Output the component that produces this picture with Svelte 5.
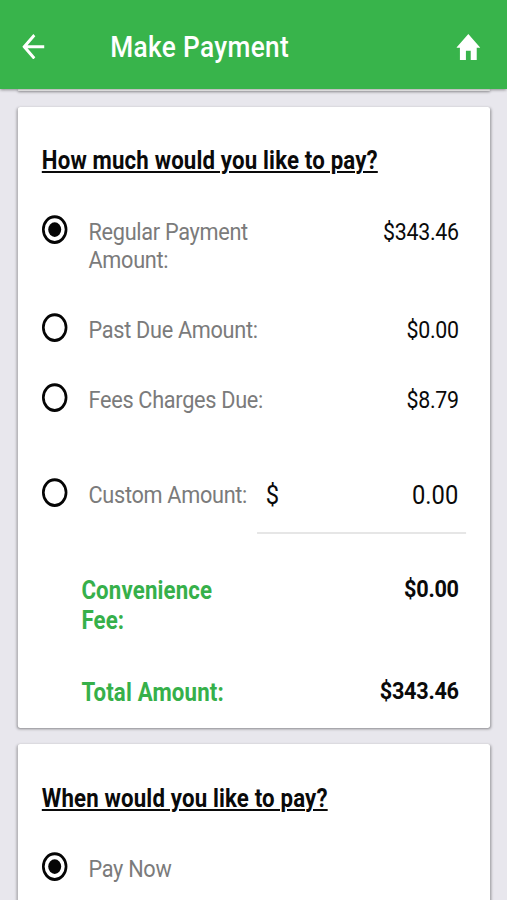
<script>
  const options = [
    { label: 'Regular Payment Amount:', amount: '$343.46', checked: true },
    { label: 'Past Due Amount:', amount: '$0.00', checked: false },
    { label: 'Fees Charges Due:', amount: '$8.79', checked: false }
  ];
</script>

{#snippet radio(checked)}
  <svg class="radio" width="30" height="30" viewBox="0 0 30 30">
    <circle cx="14.5" cy="14.6" r="12.8" fill="none" stroke="#050505" stroke-width="3" />
    {#if checked}<circle cx="14.5" cy="14.6" r="7.3" fill="#050505" />{/if}
  </svg>
{/snippet}

<div class="screen">
  <header>
    <svg class="back" width="25" height="25.5" viewBox="4 4 16 16" preserveAspectRatio="none" fill="#fff">
      <path d="M20 11H7.83l5.59-5.59L12 4l-8 8 8 8 1.41-1.41L7.83 13H20v-2z" />
    </svg>
    <h1>Make Payment</h1>
    <svg class="home" width="27" height="26" viewBox="2 3 20 17" preserveAspectRatio="none" fill="#fff">
      <path d="M10 20v-6h4v6h5v-8h3L12 3 2 12h3v8z" />
    </svg>
  </header>
  <main>
    <section class="card previous"></section>

    <section class="card amounts">
      <h2>How much would you like to pay?</h2>
      {#each options as o}
        <div class="row">
          {@render radio(o.checked)}
          <span class="label">{o.label}</span>
          <span class="amount">{o.amount}</span>
        </div>
      {/each}
      <div class="row custom">
        {@render radio(false)}
        <span class="label">Custom Amount:</span>
        <div class="field"><span>$</span><span>0.00</span></div>
      </div>
      <div class="sum fee"><span class="name">Convenience Fee:</span><span class="value">$0.00</span></div>
      <div class="sum"><span class="name">Total Amount:</span><span class="value">$343.46</span></div>
    </section>

    <section class="card when">
      <h2>When would you like to pay?</h2>
      <div class="row">
        {@render radio(true)}
        <span class="label">Pay Now</span>
      </div>
    </section>
  </main>
</div>

<style>
  :global(body) { margin: 0; overflow: hidden; background: #e8e7ed; }
  /* Condensed horizontally: a 570px layout shown at 507px */
  .screen {
    width: 570px;
    height: 900px;
    overflow: hidden;
    display: flex;
    flex-direction: column;
    transform: scaleX(0.8895);
    transform-origin: 0 0;
    background: #e8e7ed;
    font-family: Roboto, sans-serif;
    color: #0a0a0a;
  }
  header {
    flex: none;
    height: 89px;
    box-sizing: border-box;
    padding: 4px 30.5px 0 24.5px;
    display: flex;
    align-items: center;
    background: #38b44b;
    box-shadow: 0 1px 3px rgba(0, 0, 0, 0.4);
    z-index: 1;
  }
  h1 {
    margin: 0 auto 0 74.5px;
    font-size: 29.5px;
    font-weight: 500;
    line-height: 36px;
    letter-spacing: 0.38px;
    color: #fff;
  }
  main { flex: 1; padding: 0 19.3px 0 20px; display: flex; flex-direction: column; }
  .card {
    box-sizing: border-box;
    flex: none;
    padding: 39px 27px 0;
    background: #fff;
    border-radius: 3px;
    box-shadow: 0 1px 3px rgba(0, 0, 0, 0.42);
  }
  .previous { height: 2px; padding: 0; }
  .amounts { margin-top: 16px; height: 621px; }
  .when { margin-top: 16px; height: 180px; padding-top: 39.5px; }
  h2 {
    margin: 0;
    font-size: 25px;
    font-weight: 700;
    line-height: 30px;
    letter-spacing: 0.18px;
    text-decoration: underline;
    text-decoration-thickness: 1.6px;
    text-underline-offset: 2px;
  }
  .row { display: flex; align-items: flex-start; margin-top: 42px; line-height: 28px; }
  .when .row { margin-top: 41.5px; }
  .radio { flex: none; margin: -3px 0 -4px; }
  .label { width: 200px; margin-left: 22.5px; font-size: 24.4px; letter-spacing: -0.34px; color: #7b7b7b; }
  .amount { margin-left: auto; padding-right: 8px; font-size: 24px; letter-spacing: -0.3px; }
  .row.custom { margin-top: 67px; }
  .custom .label, .row:not(:nth-of-type(1)) .label { width: auto; white-space: nowrap; }
  .field {
    width: 235px;
    height: 53px;
    box-sizing: border-box;
    margin-left: auto;
    padding: 0 8.5px 0 10px;
    display: flex;
    justify-content: space-between;
    border-bottom: 2px solid #e6e6e6;
    font-size: 26.7px;
  }
  .sum { display: flex; justify-content: space-between; margin-top: 42px; padding: 0 8px 0 44.5px; line-height: 30px; font-weight: 700; }
  .sum.fee { margin-top: 42px; }
  .name { width: 170px; font-size: 25px; letter-spacing: 0.18px; color: #36b04a; }
  .value { font-size: 24.4px; line-height: 26px; letter-spacing: -0.32px; }
</style>
